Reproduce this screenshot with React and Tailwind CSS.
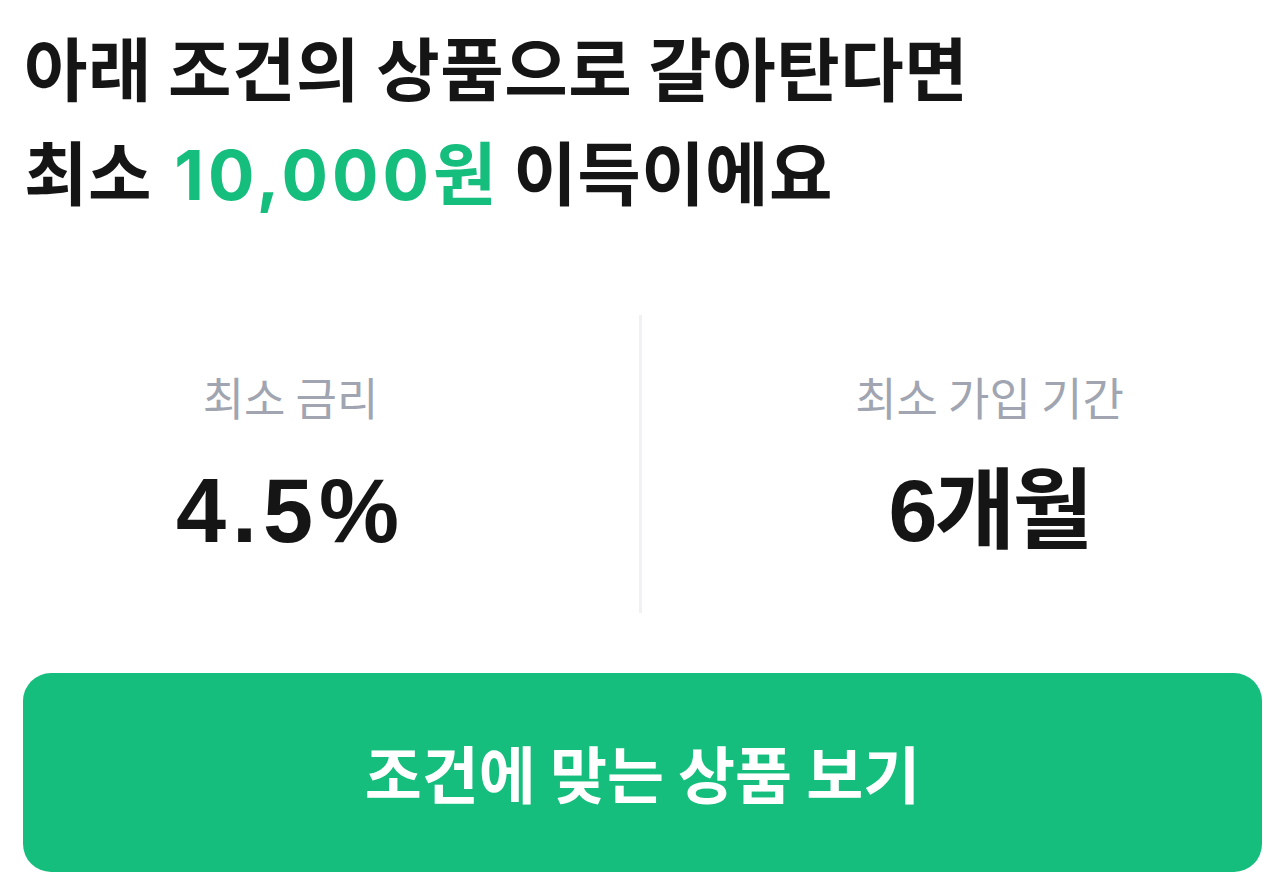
export default function App() {
  return (
    <div
      className="w-[1280px] h-[892px] bg-white overflow-hidden"
      style={{ fontFamily: '"Noto Sans CJK KR", "Noto Sans", sans-serif' }}
    >
      <div className="px-6 pt-[14px]">
        <h1 className="text-[69px] leading-[104px] font-bold text-[#151515] tracking-[0.5px]">
          아래 조건의 상품으로 갈아탄다면
          <br />
          최소{" "}
          <span className="ml-[6px] text-[#15be7d]">
            <span className="font-['Inter','Noto_Sans_CJK_KR',sans-serif] tracking-[4px]">10,000</span>원
          </span>{" "}
          이득이에요
        </h1>
      </div>

      <div className="mt-[88px] flex justify-center">
        <div className="w-[500px] flex flex-col items-center pt-[56px]">
          <span className="text-[45px] leading-[52px] text-[#a0a5b1] font-normal">최소 금리</span>
          <span className="mt-[43px] text-[90px] leading-[90px] font-bold text-[#151515] tracking-[6px] font-['Liberation_Sans','Noto_Sans_CJK_KR',sans-serif]">
            4.5%
          </span>
        </div>
        <div className="mx-[98px] w-[3px] h-[298px] bg-[#f1f1f4]" />
        <div className="w-[500px] flex flex-col items-center pt-[56px]">
          <span className="text-[45px] leading-[52px] text-[#a0a5b1] font-normal">최소 가입 기간</span>
          <span className="mt-[43px] text-[88px] leading-[90px] font-bold text-[#151515] tracking-[-3px] font-['Liberation_Sans','Noto_Sans_CJK_KR',sans-serif]">
            6개월
          </span>
        </div>
      </div>

      <div className="pl-[23px] pr-[18px] mt-[60px]">
        <button className="w-full h-[199px] rounded-[28px] bg-[#15be7d] text-white text-[62px] font-bold flex items-center justify-center">
          조건에 맞는 상품 보기
        </button>
      </div>
    </div>
  );
}
